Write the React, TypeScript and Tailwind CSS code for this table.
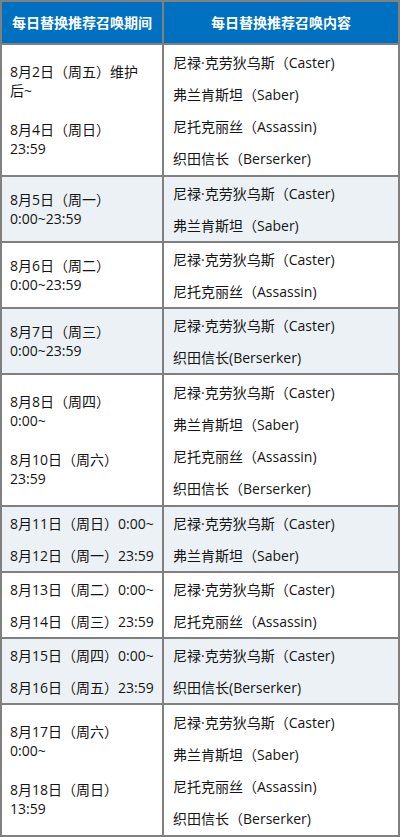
import React from 'react';

type Row = {
  when: string[][];
  split?: boolean;
  who: string[];
};

const rows: Row[] = [
  {
    when: [
      ['8月2日（周五）维护', '后~'],
      ['8月4日（周日）', '23:59'],
    ],
    who: ['尼禄·克劳狄乌斯（Caster)', '弗兰肯斯坦（Saber)', '尼托克丽丝（Assassin)', '织田信长（Berserker)'],
  },
  { when: [['8月5日（周一）', '0:00~23:59']], who: ['尼禄·克劳狄乌斯（Caster)', '弗兰肯斯坦（Saber)'] },
  { when: [['8月6日（周二）', '0:00~23:59']], who: ['尼禄·克劳狄乌斯（Caster)', '尼托克丽丝（Assassin)'] },
  { when: [['8月7日（周三）', '0:00~23:59']], who: ['尼禄·克劳狄乌斯（Caster)', '织田信长(Berserker)'] },
  {
    when: [
      ['8月8日（周四）', '0:00~'],
      ['8月10日（周六）', '23:59'],
    ],
    who: ['尼禄·克劳狄乌斯（Caster)', '弗兰肯斯坦（Saber)', '尼托克丽丝（Assassin)', '织田信长（Berserker)'],
  },
  { when: [['8月11日（周日）0:00~', '8月12日（周一）23:59']], split: true, who: ['尼禄·克劳狄乌斯（Caster)', '弗兰肯斯坦（Saber)'] },
  { when: [['8月13日（周二）0:00~', '8月14日（周三）23:59']], split: true, who: ['尼禄·克劳狄乌斯（Caster)', '尼托克丽丝（Assassin)'] },
  { when: [['8月15日（周四）0:00~', '8月16日（周五）23:59']], split: true, who: ['尼禄·克劳狄乌斯（Caster)', '织田信长(Berserker)'] },
  {
    when: [
      ['8月17日（周六）', '0:00~'],
      ['8月18日（周日）', '13:59'],
    ],
    who: ['尼禄·克劳狄乌斯（Caster)', '弗兰肯斯坦（Saber)', '尼托克丽丝（Assassin)', '织田信长（Berserker)'],
  },
];

export default function App() {
  return (
    <div className="w-[400px] bg-white font-['Open_Sans','Noto_Sans_CJK_SC',sans-serif] text-[14px] text-[#141414]">
      <table className="w-[400px] table-fixed border-collapse border-2 border-[#808080]">
        <colgroup>
          <col className="w-[162px]" />
          <col />
        </colgroup>
        <thead>
          <tr className="h-[43px] bg-[#0070c0] text-white font-bold">
            <th className="border-2 border-[#808080] text-center font-bold">每日替换推荐召唤期间</th>
            <th className="border-2 border-[#808080] text-center font-bold">每日替换推荐召唤内容</th>
          </tr>
        </thead>
        <tbody>
          {rows.map((row, i) => (
            <tr key={i} className={i % 2 === 1 ? 'bg-[#ebf1f4]' : 'bg-white'}>
              <td className="border-2 border-[#808080] px-2 align-middle">
                {row.split ? (
                  row.when[0].map((line) => (
                    <div key={line} className="flex h-[32px] items-center whitespace-nowrap">
                      {line}
                    </div>
                  ))
                ) : (
                  <div className="flex flex-col gap-5">
                    {row.when.map((p, j) => (
                      <div key={j} className="leading-[19px]">
                        {p.map((line) => (
                          <div key={line} className="whitespace-nowrap">{line}</div>
                        ))}
                      </div>
                    ))}
                  </div>
                )}
              </td>
              <td className={`border-2 border-[#808080] pl-[9px] align-middle ${row.who.length > 2 ? 'py-px' : ''}`}>
                {row.who.map((name, k) => (
                  <div key={k} className="flex h-[32px] items-center whitespace-nowrap">
                    {name}
                  </div>
                ))}
              </td>
            </tr>
          ))}
        </tbody>
      </table>
    </div>
  );
}
